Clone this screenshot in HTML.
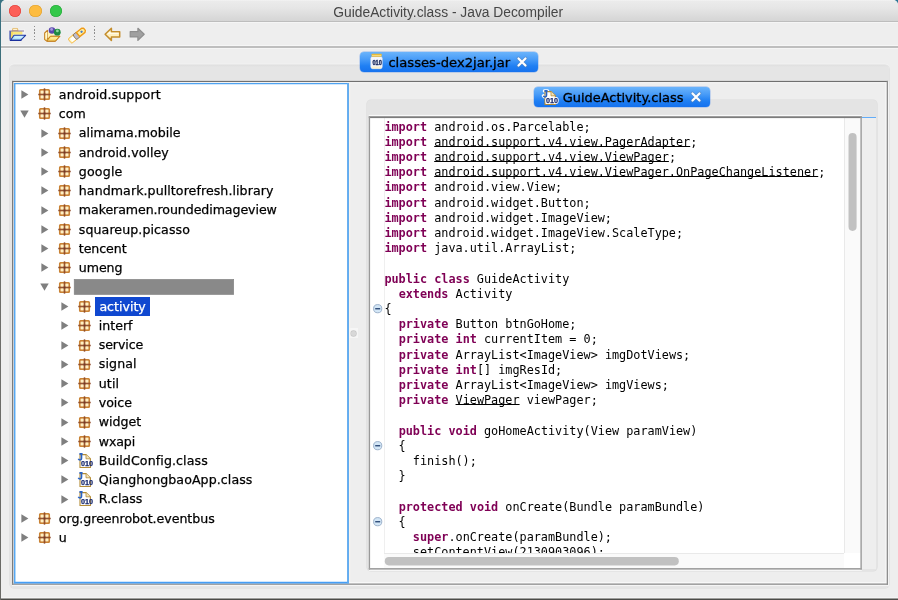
<!DOCTYPE html>
<html><head><meta charset="utf-8"><title>GuideActivity.class - Java Decompiler</title>
<style>
html,body{margin:0;padding:0;}
body{width:898px;height:600px;overflow:hidden;position:relative;background:#4c4c48;font-family:"DejaVu Sans","Liberation Sans",sans-serif;}
.desk{position:absolute;left:0;top:0;width:898px;height:12px;background:linear-gradient(90deg,#3a7484 0,#3b7f8e 1%,#2a7696 99%,#2a7696 100%);}
.win{position:absolute;left:1px;top:0;width:897px;height:600px;background:#eeeeee;border-radius:5px 5px 0 0;overflow:hidden;}
.title{position:absolute;left:0;top:0;width:100%;height:22.3px;background:linear-gradient(#f3f3f3 0,#ebebeb 1.5px,#e6e6e6 8px,#d5d5d5 20.8px);border-bottom:1.5px solid #bdbdbd;box-sizing:border-box;box-shadow:0 1px 0 #f5f5f5;}
.title span{position:absolute;left:-0.8px;width:896px;top:4.7px;text-align:center;font-family:"Liberation Sans",sans-serif;font-size:13.8px;color:#464646;line-height:16px;}
.tl-btn{position:absolute;width:12.4px;height:12.4px;border-radius:50%;top:4.9px;}
.tbsep{position:absolute;left:0;top:46.1px;width:100%;height:1.8px;background:#bebebe;box-shadow:0 -1px 0 #f6f6f6,0 1.1px 0 #f5f5f5;}
.ic{position:absolute;display:block;overflow:visible;}
.dots{position:absolute;top:26px;width:1.5px;height:15px;background:repeating-linear-gradient(#8e8e8e 0,#8e8e8e 1.5px,transparent 1.5px,transparent 3.2px);}
.outer{position:absolute;left:9.8px;top:64.9px;width:879.6px;height:523px;background:linear-gradient(#dfdfdf 0,#e5e5e5 2px,#e5e5e5 100%);border-radius:4px;box-shadow:0 0 0 0.6px #dcdcdc,0 -1.2px 0 #f5f5f5;}
.tab{position:absolute;border-radius:4px;background:linear-gradient(#6bb4fb 0,#4a9df8 35%,#1f7ff3 70%,#1672ee 100%);box-shadow:0 0 0 0.5px rgba(60,130,235,0.5);color:#000;font-size:13px;white-space:nowrap;-webkit-text-stroke:0.3px #000;}
.tab span{position:absolute;top:0;line-height:20px;}
.tree{position:absolute;left:14px;top:83px;width:335px;height:500px;background:#fff;}
.tl,.sel{position:absolute;font-size:12.6px;line-height:19.2px;height:19.2px;white-space:nowrap;color:#000;-webkit-text-stroke:0.25px currentColor;}
.sel{background:#1048d0;color:#fff;padding:0 4.2px;width:46.4px;}
.redact{position:absolute;width:160px;height:15.8px;background:#8b8b8b;}
.rpane{position:absolute;left:12px;top:81px;width:876px;height:504px;background:#eeeeee;}
.inner{position:absolute;left:366.6px;top:99.9px;width:510.4px;height:471.4px;background:#e4e4e4;border-radius:4px;box-shadow:0 0 0 0.6px #dcdcdc;}
.ruler{position:absolute;left:862px;top:117px;width:14.3px;height:452px;background:#eeeeee;}
.ruler i{position:absolute;left:0;top:-0.3px;width:14px;height:1px;background:#62acf8;}
.code{position:absolute;left:370px;top:118px;width:491px;height:450px;background:#fff;overflow:hidden;}
.gut{position:absolute;left:13.6px;top:0;width:1px;height:100%;background:#efefef;}
pre{position:absolute;margin:0;left:14.4px;top:1.6px;font-family:"DejaVu Sans Mono","Liberation Mono",monospace;font-size:11.82px;line-height:15.21px;color:#000;letter-spacing:0;}
pre b{color:#7f0055;font-weight:bold;}
pre u{text-decoration:underline;text-decoration-thickness:0.9px;text-underline-offset:0.2px;text-decoration-skip-ink:none;}
.vtrack{position:absolute;right:0;top:0;width:17px;height:100%;background:#fafafa;border-left:1px solid #e9e9e9;box-sizing:border-box;}
.htrack{position:absolute;left:14px;bottom:0;right:0;height:15px;background:#fafafa;border-top:1px solid #e9e9e9;box-sizing:border-box;}
.corner{position:absolute;right:0;bottom:0;width:17px;height:15px;background:#fff;}
.thumb{position:absolute;background:#c1c1c1;border-radius:4.2px;}
.divdot{position:absolute;left:349.3px;top:328px;width:8.6px;height:10px;background:#f6f6f6;}
.divdot i{position:absolute;left:1.5px;top:2.5px;width:5px;height:5px;border-radius:50%;background:#d8d8d8;box-shadow:0 0 0 0.7px #c6c6c6;}
.lstrip{position:absolute;left:0;top:0;width:3px;height:600px;background:linear-gradient(#3a7484 0,#3d6d78 70px,#66706f 170px,#6e6e6a 300px,#6a6a66 100%);}
</style></head><body>
<div class="desk"></div><div class="lstrip"></div>
<div class="win">
<div style="position:absolute;left:-1px;top:0;width:898px;height:600px;will-change:transform">
<div class="title" style="left:1px;width:897px"><span>GuideActivity.class - Java Decompiler</span>
<div class="tl-btn" style="left:7.8px;background:#fc5f57;box-shadow:0 0 0 0.6px #df3f38 inset"></div>
<div class="tl-btn" style="left:28.3px;background:#fdbc40;box-shadow:0 0 0 0.6px #dea032 inset"></div>
<div class="tl-btn" style="left:48.5px;background:#34c84a;box-shadow:0 0 0 0.6px #27a93a inset"></div>
</div>

<svg class="ic" style="left:8px;top:26px" width="20" height="16" viewBox="0 0 20 16">
<path d="M1 3.6H4L4.6 1.4H10L10.6 3.6H17.2V9.5L13 15.3H1.6L1 14Z" fill="#f6f6f6" opacity="0.7"/>
<path d="M4.2 4.8L4.8 2.4H9.5L10.1 4.8Z" fill="#eecb7e" stroke="#dcae58" stroke-width="0.7"/>
<rect x="5.2" y="2.9" width="3.8" height="1" fill="#fff6dc"/>
<rect x="2.6" y="5.2" width="11.8" height="3.4" fill="#fbe87a"/>
<rect x="2.6" y="5.2" width="2.4" height="8" fill="#f6da64"/>
<path d="M1.2 5H16" stroke="#7f6a9e" stroke-width="0.9"/>
<path d="M2.1 5.3V13.8" stroke="#2a40a8" stroke-width="1.3"/>
<path d="M6 9.3H17.6L12.8 14.2H2.6Z" fill="#b2e4fb" stroke="#2238a4" stroke-width="1.1" stroke-linejoin="round"/>
<path d="M7.4 10.5H15L14.1 11.6H6.4Z" fill="#e2f7ff"/>
<path d="M2.3 14.4H12.9" stroke="#1a2e9c" stroke-width="1.2" stroke-linecap="round"/>
</svg>
<svg class="ic" style="left:44px;top:26px" width="19" height="16" viewBox="0 0 19 16">
<path d="M3.4 3.4L0 6.8V14L2.6 16H11.6L17 10.2V3Z" fill="#f8f8f8" opacity="0.6"/>
<path d="M3.4 4.3L0.7 7V13.6L2.8 15.1H11.3L15.9 10.2H6.4L3.4 13V4.3Z" fill="#fbe386" stroke="#c27d1e" stroke-width="1.1" stroke-linejoin="round"/>
<path d="M1.4 7.3L3 5.7V12.6L1.5 13.2Z" fill="#fff8d4"/>
<path d="M3.6 6V12.4L6.4 10.1H9.5V6Z" fill="#fff3b4"/>
<path d="M6.4 10.2H15.9L11.3 15.1H2.8Z" fill="#fbdf72" stroke="#c27d1e" stroke-width="1" stroke-linejoin="round"/>
<path d="M7.2 11.4H13.6L12.7 12.4H6.2Z" fill="#fff3b0"/>
<circle cx="8" cy="4.5" r="3.3" fill="#5a48ae"/><circle cx="7.6" cy="3.4" r="1.4" fill="#a79bdf"/>
<circle cx="13.3" cy="6.2" r="3.4" fill="#1e8a42"/><circle cx="13.4" cy="4.9" r="1.4" fill="#8ed6a0"/>
</svg>
<svg class="ic" style="left:68px;top:25.6px" width="19" height="18" viewBox="0 0 19 18">
<g transform="rotate(-39 9.5 9)">
<path d="M-0.8 5.6H19.4Q20.8 9 19.4 12.4H-0.8Z" fill="#f8f8f8" opacity="0.6"/>
<path d="M6.2 6.1H1Q-0.4 6.1 -0.4 7.5V10.6Q-0.4 11.9 1 11.9H6.2Z" fill="#fff6c4" stroke="#f3b43c" stroke-width="0.9"/>
<path d="M6.2 7.4H1.4V11H6.2Z" fill="#ffffff"/>
<path d="M6.2 6H10.2V12H6.2Q5 9 6.2 6Z" fill="#bcbcce" stroke="#8e6e3e" stroke-width="0.8"/>
<path d="M10.2 6.3H17L18.5 7.6V10.4L17 11.7H10.2Z" fill="#fdeea2" stroke="#ee9a18" stroke-width="1.4" stroke-linejoin="round"/>
<rect x="13.6" y="8" width="2.2" height="2" rx="0.6" fill="#4a7ac2"/>
</g>
</svg>
<svg class="ic" style="left:104px;top:27px" width="17" height="15" viewBox="0 0 17 15">
<path d="M1.1 7.3L7.4 1.3V4.7H15.7V9.9H7.4V13.4Z" fill="#fff0c0" stroke="#c48d2c" stroke-width="1.5" stroke-linejoin="round"/>
<path d="M3.2 7.3L6.4 4.2V5.8H14.6V6.8H5Z" fill="#ffffff" opacity="0.85"/>
</svg>
<svg class="ic" style="left:129px;top:27px" width="17" height="15" viewBox="0 0 17 15">
<path d="M15.2 7.3L8.9 1.3V4.7H1.2V9.9H8.9V13.4Z" fill="#a0a0a0" stroke="#8e8e8e" stroke-width="1.2" stroke-linejoin="round"/>
</svg>
<div class="dots" style="left:33.8px"></div>
<div class="dots" style="left:93.6px"></div>

<div class="tbsep"></div>
<div class="outer"></div>
<div class="tab" style="left:360.3px;top:52px;width:177.8px;height:20px"><span style="left:28.1px;top:0.5px;font-size:13.15px">classes-dex2jar.jar</span></div>
<svg class="ic" style="left:369.5px;top:53px" width="13" height="16.5" viewBox="0 0 13 16.5">
<rect x="0.7" y="3.6" width="11.6" height="12.2" rx="2" fill="#f4f6fc" stroke="#d9dbe6" stroke-width="0.5"/>
<rect x="1.6" y="13.4" width="9.8" height="2" rx="0.8" fill="#fbf0cc"/>
<rect x="1.5" y="0.7" width="10.2" height="3" rx="0.7" fill="#e9bb3a"/>
<rect x="2" y="2" width="9.2" height="0.9" fill="#f8dd84"/>
<text x="2.4" y="12.1" font-family="Liberation Sans, sans-serif" font-weight="bold" font-size="6.3" fill="#18285c" stroke="#18285c" stroke-width="0.35" textLength="9.4" lengthAdjust="spacingAndGlyphs">010</text>
</svg>
<svg class="ic" style="left:516.30px;top:56.00px" width="12" height="12" viewBox="0 0 12 12"><path d="M2.3 2.3L9.7 9.7M9.7 2.3L2.3 9.7" stroke="#5c7fae" stroke-width="3.4" stroke-linecap="round" opacity="0.55"/><path d="M2.5 2.5L9.5 9.5M9.5 2.5L2.5 9.5" stroke="#ffffff" stroke-width="2.2" stroke-linecap="round"/></svg>
<div class="rpane"></div>
<div class="tree"></div>
<svg class="ic" style="left:20.80px;top:90.00px" width="8" height="9" viewBox="0 0 8 9"><path d="M0.4 0.3V8.7L7.4 4.5Z" fill="#7f7f7f"/></svg><svg class="ic" style="left:38.40px;top:88.00px" width="13" height="13" viewBox="0 0 13 13">
<rect x="1.7" y="1.7" width="9.6" height="9.6" rx="0.8" fill="#e4b079" stroke="#c98234" stroke-width="1.5"/>
<rect x="2.7" y="2.7" width="3" height="3" rx="0.8" fill="#fff1c4"/><rect x="7.3" y="2.7" width="3" height="3" rx="0.8" fill="#fff1c4"/>
<rect x="2.7" y="7.3" width="3" height="3" rx="0.8" fill="#fff1c4"/><rect x="7.3" y="7.3" width="3" height="3" rx="0.8" fill="#fff1c4"/>
<path d="M6.5 0.2V12.8M0.2 6.5H12.8" stroke="#8a4526" stroke-width="1.5" fill="none" opacity="0.85"/>
<rect x="5.6" y="5.6" width="1.8" height="1.8" fill="#6e3a2a"/>
</svg><div class="tl" style="left:58.80px;top:84.70px;letter-spacing:0.123px">android.support</div><svg class="ic" style="left:20.30px;top:109.77px" width="9" height="8" viewBox="0 0 9 8"><path d="M0.3 0.5H8.7L4.5 7.7Z" fill="#7f7f7f"/></svg><svg class="ic" style="left:38.40px;top:107.27px" width="13" height="13" viewBox="0 0 13 13">
<rect x="1.7" y="1.7" width="9.6" height="9.6" rx="0.8" fill="#e4b079" stroke="#c98234" stroke-width="1.5"/>
<rect x="2.7" y="2.7" width="3" height="3" rx="0.8" fill="#fff1c4"/><rect x="7.3" y="2.7" width="3" height="3" rx="0.8" fill="#fff1c4"/>
<rect x="2.7" y="7.3" width="3" height="3" rx="0.8" fill="#fff1c4"/><rect x="7.3" y="7.3" width="3" height="3" rx="0.8" fill="#fff1c4"/>
<path d="M6.5 0.2V12.8M0.2 6.5H12.8" stroke="#8a4526" stroke-width="1.5" fill="none" opacity="0.85"/>
<rect x="5.6" y="5.6" width="1.8" height="1.8" fill="#6e3a2a"/>
</svg><div class="tl" style="left:58.80px;top:103.97px;letter-spacing:0.098px">com</div><svg class="ic" style="left:40.80px;top:128.54px" width="8" height="9" viewBox="0 0 8 9"><path d="M0.4 0.3V8.7L7.4 4.5Z" fill="#7f7f7f"/></svg><svg class="ic" style="left:58.40px;top:126.54px" width="13" height="13" viewBox="0 0 13 13">
<rect x="1.7" y="1.7" width="9.6" height="9.6" rx="0.8" fill="#e4b079" stroke="#c98234" stroke-width="1.5"/>
<rect x="2.7" y="2.7" width="3" height="3" rx="0.8" fill="#fff1c4"/><rect x="7.3" y="2.7" width="3" height="3" rx="0.8" fill="#fff1c4"/>
<rect x="2.7" y="7.3" width="3" height="3" rx="0.8" fill="#fff1c4"/><rect x="7.3" y="7.3" width="3" height="3" rx="0.8" fill="#fff1c4"/>
<path d="M6.5 0.2V12.8M0.2 6.5H12.8" stroke="#8a4526" stroke-width="1.5" fill="none" opacity="0.85"/>
<rect x="5.6" y="5.6" width="1.8" height="1.8" fill="#6e3a2a"/>
</svg><div class="tl" style="left:78.80px;top:123.24px;letter-spacing:0.028px">alimama.mobile</div><svg class="ic" style="left:40.80px;top:147.81px" width="8" height="9" viewBox="0 0 8 9"><path d="M0.4 0.3V8.7L7.4 4.5Z" fill="#7f7f7f"/></svg><svg class="ic" style="left:58.40px;top:145.81px" width="13" height="13" viewBox="0 0 13 13">
<rect x="1.7" y="1.7" width="9.6" height="9.6" rx="0.8" fill="#e4b079" stroke="#c98234" stroke-width="1.5"/>
<rect x="2.7" y="2.7" width="3" height="3" rx="0.8" fill="#fff1c4"/><rect x="7.3" y="2.7" width="3" height="3" rx="0.8" fill="#fff1c4"/>
<rect x="2.7" y="7.3" width="3" height="3" rx="0.8" fill="#fff1c4"/><rect x="7.3" y="7.3" width="3" height="3" rx="0.8" fill="#fff1c4"/>
<path d="M6.5 0.2V12.8M0.2 6.5H12.8" stroke="#8a4526" stroke-width="1.5" fill="none" opacity="0.85"/>
<rect x="5.6" y="5.6" width="1.8" height="1.8" fill="#6e3a2a"/>
</svg><div class="tl" style="left:78.80px;top:142.51px;letter-spacing:0.067px">android.volley</div><svg class="ic" style="left:40.80px;top:167.08px" width="8" height="9" viewBox="0 0 8 9"><path d="M0.4 0.3V8.7L7.4 4.5Z" fill="#7f7f7f"/></svg><svg class="ic" style="left:58.40px;top:165.08px" width="13" height="13" viewBox="0 0 13 13">
<rect x="1.7" y="1.7" width="9.6" height="9.6" rx="0.8" fill="#e4b079" stroke="#c98234" stroke-width="1.5"/>
<rect x="2.7" y="2.7" width="3" height="3" rx="0.8" fill="#fff1c4"/><rect x="7.3" y="2.7" width="3" height="3" rx="0.8" fill="#fff1c4"/>
<rect x="2.7" y="7.3" width="3" height="3" rx="0.8" fill="#fff1c4"/><rect x="7.3" y="7.3" width="3" height="3" rx="0.8" fill="#fff1c4"/>
<path d="M6.5 0.2V12.8M0.2 6.5H12.8" stroke="#8a4526" stroke-width="1.5" fill="none" opacity="0.85"/>
<rect x="5.6" y="5.6" width="1.8" height="1.8" fill="#6e3a2a"/>
</svg><div class="tl" style="left:78.80px;top:161.78px;letter-spacing:0.174px">google</div><svg class="ic" style="left:40.80px;top:186.35px" width="8" height="9" viewBox="0 0 8 9"><path d="M0.4 0.3V8.7L7.4 4.5Z" fill="#7f7f7f"/></svg><svg class="ic" style="left:58.40px;top:184.35px" width="13" height="13" viewBox="0 0 13 13">
<rect x="1.7" y="1.7" width="9.6" height="9.6" rx="0.8" fill="#e4b079" stroke="#c98234" stroke-width="1.5"/>
<rect x="2.7" y="2.7" width="3" height="3" rx="0.8" fill="#fff1c4"/><rect x="7.3" y="2.7" width="3" height="3" rx="0.8" fill="#fff1c4"/>
<rect x="2.7" y="7.3" width="3" height="3" rx="0.8" fill="#fff1c4"/><rect x="7.3" y="7.3" width="3" height="3" rx="0.8" fill="#fff1c4"/>
<path d="M6.5 0.2V12.8M0.2 6.5H12.8" stroke="#8a4526" stroke-width="1.5" fill="none" opacity="0.85"/>
<rect x="5.6" y="5.6" width="1.8" height="1.8" fill="#6e3a2a"/>
</svg><div class="tl" style="left:78.80px;top:181.05px;letter-spacing:0.072px">handmark.pulltorefresh.library</div><svg class="ic" style="left:40.80px;top:205.62px" width="8" height="9" viewBox="0 0 8 9"><path d="M0.4 0.3V8.7L7.4 4.5Z" fill="#7f7f7f"/></svg><svg class="ic" style="left:58.40px;top:203.62px" width="13" height="13" viewBox="0 0 13 13">
<rect x="1.7" y="1.7" width="9.6" height="9.6" rx="0.8" fill="#e4b079" stroke="#c98234" stroke-width="1.5"/>
<rect x="2.7" y="2.7" width="3" height="3" rx="0.8" fill="#fff1c4"/><rect x="7.3" y="2.7" width="3" height="3" rx="0.8" fill="#fff1c4"/>
<rect x="2.7" y="7.3" width="3" height="3" rx="0.8" fill="#fff1c4"/><rect x="7.3" y="7.3" width="3" height="3" rx="0.8" fill="#fff1c4"/>
<path d="M6.5 0.2V12.8M0.2 6.5H12.8" stroke="#8a4526" stroke-width="1.5" fill="none" opacity="0.85"/>
<rect x="5.6" y="5.6" width="1.8" height="1.8" fill="#6e3a2a"/>
</svg><div class="tl" style="left:78.80px;top:200.32px;letter-spacing:-0.078px">makeramen.roundedimageview</div><svg class="ic" style="left:40.80px;top:224.89px" width="8" height="9" viewBox="0 0 8 9"><path d="M0.4 0.3V8.7L7.4 4.5Z" fill="#7f7f7f"/></svg><svg class="ic" style="left:58.40px;top:222.89px" width="13" height="13" viewBox="0 0 13 13">
<rect x="1.7" y="1.7" width="9.6" height="9.6" rx="0.8" fill="#e4b079" stroke="#c98234" stroke-width="1.5"/>
<rect x="2.7" y="2.7" width="3" height="3" rx="0.8" fill="#fff1c4"/><rect x="7.3" y="2.7" width="3" height="3" rx="0.8" fill="#fff1c4"/>
<rect x="2.7" y="7.3" width="3" height="3" rx="0.8" fill="#fff1c4"/><rect x="7.3" y="7.3" width="3" height="3" rx="0.8" fill="#fff1c4"/>
<path d="M6.5 0.2V12.8M0.2 6.5H12.8" stroke="#8a4526" stroke-width="1.5" fill="none" opacity="0.85"/>
<rect x="5.6" y="5.6" width="1.8" height="1.8" fill="#6e3a2a"/>
</svg><div class="tl" style="left:78.80px;top:219.59px;letter-spacing:0.084px">squareup.picasso</div><svg class="ic" style="left:40.80px;top:244.16px" width="8" height="9" viewBox="0 0 8 9"><path d="M0.4 0.3V8.7L7.4 4.5Z" fill="#7f7f7f"/></svg><svg class="ic" style="left:58.40px;top:242.16px" width="13" height="13" viewBox="0 0 13 13">
<rect x="1.7" y="1.7" width="9.6" height="9.6" rx="0.8" fill="#e4b079" stroke="#c98234" stroke-width="1.5"/>
<rect x="2.7" y="2.7" width="3" height="3" rx="0.8" fill="#fff1c4"/><rect x="7.3" y="2.7" width="3" height="3" rx="0.8" fill="#fff1c4"/>
<rect x="2.7" y="7.3" width="3" height="3" rx="0.8" fill="#fff1c4"/><rect x="7.3" y="7.3" width="3" height="3" rx="0.8" fill="#fff1c4"/>
<path d="M6.5 0.2V12.8M0.2 6.5H12.8" stroke="#8a4526" stroke-width="1.5" fill="none" opacity="0.85"/>
<rect x="5.6" y="5.6" width="1.8" height="1.8" fill="#6e3a2a"/>
</svg><div class="tl" style="left:78.80px;top:238.86px;letter-spacing:-0.081px">tencent</div><svg class="ic" style="left:40.80px;top:263.43px" width="8" height="9" viewBox="0 0 8 9"><path d="M0.4 0.3V8.7L7.4 4.5Z" fill="#7f7f7f"/></svg><svg class="ic" style="left:58.40px;top:261.43px" width="13" height="13" viewBox="0 0 13 13">
<rect x="1.7" y="1.7" width="9.6" height="9.6" rx="0.8" fill="#e4b079" stroke="#c98234" stroke-width="1.5"/>
<rect x="2.7" y="2.7" width="3" height="3" rx="0.8" fill="#fff1c4"/><rect x="7.3" y="2.7" width="3" height="3" rx="0.8" fill="#fff1c4"/>
<rect x="2.7" y="7.3" width="3" height="3" rx="0.8" fill="#fff1c4"/><rect x="7.3" y="7.3" width="3" height="3" rx="0.8" fill="#fff1c4"/>
<path d="M6.5 0.2V12.8M0.2 6.5H12.8" stroke="#8a4526" stroke-width="1.5" fill="none" opacity="0.85"/>
<rect x="5.6" y="5.6" width="1.8" height="1.8" fill="#6e3a2a"/>
</svg><div class="tl" style="left:78.80px;top:258.13px;letter-spacing:-0.057px">umeng</div><svg class="ic" style="left:40.30px;top:283.20px" width="9" height="8" viewBox="0 0 9 8"><path d="M0.3 0.5H8.7L4.5 7.7Z" fill="#7f7f7f"/></svg><svg class="ic" style="left:58.40px;top:280.70px" width="13" height="13" viewBox="0 0 13 13">
<rect x="1.7" y="1.7" width="9.6" height="9.6" rx="0.8" fill="#e4b079" stroke="#c98234" stroke-width="1.5"/>
<rect x="2.7" y="2.7" width="3" height="3" rx="0.8" fill="#fff1c4"/><rect x="7.3" y="2.7" width="3" height="3" rx="0.8" fill="#fff1c4"/>
<rect x="2.7" y="7.3" width="3" height="3" rx="0.8" fill="#fff1c4"/><rect x="7.3" y="7.3" width="3" height="3" rx="0.8" fill="#fff1c4"/>
<path d="M6.5 0.2V12.8M0.2 6.5H12.8" stroke="#8a4526" stroke-width="1.5" fill="none" opacity="0.85"/>
<rect x="5.6" y="5.6" width="1.8" height="1.8" fill="#6e3a2a"/>
</svg><svg class="ic" style="left:73px;top:278px" width="162" height="18" viewBox="73 278 162 18"><rect x="74.2" y="279.4" width="159.5" height="15.1" fill="#898989" stroke="#808080" stroke-width="0.6"/></svg><svg class="ic" style="left:60.80px;top:301.97px" width="8" height="9" viewBox="0 0 8 9"><path d="M0.4 0.3V8.7L7.4 4.5Z" fill="#7f7f7f"/></svg><svg class="ic" style="left:78.40px;top:299.97px" width="13" height="13" viewBox="0 0 13 13">
<rect x="1.7" y="1.7" width="9.6" height="9.6" rx="0.8" fill="#e4b079" stroke="#c98234" stroke-width="1.5"/>
<rect x="2.7" y="2.7" width="3" height="3" rx="0.8" fill="#fff1c4"/><rect x="7.3" y="2.7" width="3" height="3" rx="0.8" fill="#fff1c4"/>
<rect x="2.7" y="7.3" width="3" height="3" rx="0.8" fill="#fff1c4"/><rect x="7.3" y="7.3" width="3" height="3" rx="0.8" fill="#fff1c4"/>
<path d="M6.5 0.2V12.8M0.2 6.5H12.8" stroke="#8a4526" stroke-width="1.5" fill="none" opacity="0.85"/>
<rect x="5.6" y="5.6" width="1.8" height="1.8" fill="#6e3a2a"/>
</svg><div class="sel" style="left:95.2px;top:296.67px">activity</div><svg class="ic" style="left:60.80px;top:321.24px" width="8" height="9" viewBox="0 0 8 9"><path d="M0.4 0.3V8.7L7.4 4.5Z" fill="#7f7f7f"/></svg><svg class="ic" style="left:78.40px;top:319.24px" width="13" height="13" viewBox="0 0 13 13">
<rect x="1.7" y="1.7" width="9.6" height="9.6" rx="0.8" fill="#e4b079" stroke="#c98234" stroke-width="1.5"/>
<rect x="2.7" y="2.7" width="3" height="3" rx="0.8" fill="#fff1c4"/><rect x="7.3" y="2.7" width="3" height="3" rx="0.8" fill="#fff1c4"/>
<rect x="2.7" y="7.3" width="3" height="3" rx="0.8" fill="#fff1c4"/><rect x="7.3" y="7.3" width="3" height="3" rx="0.8" fill="#fff1c4"/>
<path d="M6.5 0.2V12.8M0.2 6.5H12.8" stroke="#8a4526" stroke-width="1.5" fill="none" opacity="0.85"/>
<rect x="5.6" y="5.6" width="1.8" height="1.8" fill="#6e3a2a"/>
</svg><div class="tl" style="left:98.80px;top:315.94px;letter-spacing:-0.014px">interf</div><svg class="ic" style="left:60.80px;top:340.51px" width="8" height="9" viewBox="0 0 8 9"><path d="M0.4 0.3V8.7L7.4 4.5Z" fill="#7f7f7f"/></svg><svg class="ic" style="left:78.40px;top:338.51px" width="13" height="13" viewBox="0 0 13 13">
<rect x="1.7" y="1.7" width="9.6" height="9.6" rx="0.8" fill="#e4b079" stroke="#c98234" stroke-width="1.5"/>
<rect x="2.7" y="2.7" width="3" height="3" rx="0.8" fill="#fff1c4"/><rect x="7.3" y="2.7" width="3" height="3" rx="0.8" fill="#fff1c4"/>
<rect x="2.7" y="7.3" width="3" height="3" rx="0.8" fill="#fff1c4"/><rect x="7.3" y="7.3" width="3" height="3" rx="0.8" fill="#fff1c4"/>
<path d="M6.5 0.2V12.8M0.2 6.5H12.8" stroke="#8a4526" stroke-width="1.5" fill="none" opacity="0.85"/>
<rect x="5.6" y="5.6" width="1.8" height="1.8" fill="#6e3a2a"/>
</svg><div class="tl" style="left:98.80px;top:335.21px;letter-spacing:-0.118px">service</div><svg class="ic" style="left:60.80px;top:359.78px" width="8" height="9" viewBox="0 0 8 9"><path d="M0.4 0.3V8.7L7.4 4.5Z" fill="#7f7f7f"/></svg><svg class="ic" style="left:78.40px;top:357.78px" width="13" height="13" viewBox="0 0 13 13">
<rect x="1.7" y="1.7" width="9.6" height="9.6" rx="0.8" fill="#e4b079" stroke="#c98234" stroke-width="1.5"/>
<rect x="2.7" y="2.7" width="3" height="3" rx="0.8" fill="#fff1c4"/><rect x="7.3" y="2.7" width="3" height="3" rx="0.8" fill="#fff1c4"/>
<rect x="2.7" y="7.3" width="3" height="3" rx="0.8" fill="#fff1c4"/><rect x="7.3" y="7.3" width="3" height="3" rx="0.8" fill="#fff1c4"/>
<path d="M6.5 0.2V12.8M0.2 6.5H12.8" stroke="#8a4526" stroke-width="1.5" fill="none" opacity="0.85"/>
<rect x="5.6" y="5.6" width="1.8" height="1.8" fill="#6e3a2a"/>
</svg><div class="tl" style="left:98.80px;top:354.48px;letter-spacing:0.106px">signal</div><svg class="ic" style="left:60.80px;top:379.05px" width="8" height="9" viewBox="0 0 8 9"><path d="M0.4 0.3V8.7L7.4 4.5Z" fill="#7f7f7f"/></svg><svg class="ic" style="left:78.40px;top:377.05px" width="13" height="13" viewBox="0 0 13 13">
<rect x="1.7" y="1.7" width="9.6" height="9.6" rx="0.8" fill="#e4b079" stroke="#c98234" stroke-width="1.5"/>
<rect x="2.7" y="2.7" width="3" height="3" rx="0.8" fill="#fff1c4"/><rect x="7.3" y="2.7" width="3" height="3" rx="0.8" fill="#fff1c4"/>
<rect x="2.7" y="7.3" width="3" height="3" rx="0.8" fill="#fff1c4"/><rect x="7.3" y="7.3" width="3" height="3" rx="0.8" fill="#fff1c4"/>
<path d="M6.5 0.2V12.8M0.2 6.5H12.8" stroke="#8a4526" stroke-width="1.5" fill="none" opacity="0.85"/>
<rect x="5.6" y="5.6" width="1.8" height="1.8" fill="#6e3a2a"/>
</svg><div class="tl" style="left:98.80px;top:373.75px;letter-spacing:0.095px">util</div><svg class="ic" style="left:60.80px;top:398.32px" width="8" height="9" viewBox="0 0 8 9"><path d="M0.4 0.3V8.7L7.4 4.5Z" fill="#7f7f7f"/></svg><svg class="ic" style="left:78.40px;top:396.32px" width="13" height="13" viewBox="0 0 13 13">
<rect x="1.7" y="1.7" width="9.6" height="9.6" rx="0.8" fill="#e4b079" stroke="#c98234" stroke-width="1.5"/>
<rect x="2.7" y="2.7" width="3" height="3" rx="0.8" fill="#fff1c4"/><rect x="7.3" y="2.7" width="3" height="3" rx="0.8" fill="#fff1c4"/>
<rect x="2.7" y="7.3" width="3" height="3" rx="0.8" fill="#fff1c4"/><rect x="7.3" y="7.3" width="3" height="3" rx="0.8" fill="#fff1c4"/>
<path d="M6.5 0.2V12.8M0.2 6.5H12.8" stroke="#8a4526" stroke-width="1.5" fill="none" opacity="0.85"/>
<rect x="5.6" y="5.6" width="1.8" height="1.8" fill="#6e3a2a"/>
</svg><div class="tl" style="left:98.80px;top:393.02px;letter-spacing:-0.049px">voice</div><svg class="ic" style="left:60.80px;top:417.59px" width="8" height="9" viewBox="0 0 8 9"><path d="M0.4 0.3V8.7L7.4 4.5Z" fill="#7f7f7f"/></svg><svg class="ic" style="left:78.40px;top:415.59px" width="13" height="13" viewBox="0 0 13 13">
<rect x="1.7" y="1.7" width="9.6" height="9.6" rx="0.8" fill="#e4b079" stroke="#c98234" stroke-width="1.5"/>
<rect x="2.7" y="2.7" width="3" height="3" rx="0.8" fill="#fff1c4"/><rect x="7.3" y="2.7" width="3" height="3" rx="0.8" fill="#fff1c4"/>
<rect x="2.7" y="7.3" width="3" height="3" rx="0.8" fill="#fff1c4"/><rect x="7.3" y="7.3" width="3" height="3" rx="0.8" fill="#fff1c4"/>
<path d="M6.5 0.2V12.8M0.2 6.5H12.8" stroke="#8a4526" stroke-width="1.5" fill="none" opacity="0.85"/>
<rect x="5.6" y="5.6" width="1.8" height="1.8" fill="#6e3a2a"/>
</svg><div class="tl" style="left:98.80px;top:412.29px;letter-spacing:-0.031px">widget</div><svg class="ic" style="left:60.80px;top:436.86px" width="8" height="9" viewBox="0 0 8 9"><path d="M0.4 0.3V8.7L7.4 4.5Z" fill="#7f7f7f"/></svg><svg class="ic" style="left:78.40px;top:434.86px" width="13" height="13" viewBox="0 0 13 13">
<rect x="1.7" y="1.7" width="9.6" height="9.6" rx="0.8" fill="#e4b079" stroke="#c98234" stroke-width="1.5"/>
<rect x="2.7" y="2.7" width="3" height="3" rx="0.8" fill="#fff1c4"/><rect x="7.3" y="2.7" width="3" height="3" rx="0.8" fill="#fff1c4"/>
<rect x="2.7" y="7.3" width="3" height="3" rx="0.8" fill="#fff1c4"/><rect x="7.3" y="7.3" width="3" height="3" rx="0.8" fill="#fff1c4"/>
<path d="M6.5 0.2V12.8M0.2 6.5H12.8" stroke="#8a4526" stroke-width="1.5" fill="none" opacity="0.85"/>
<rect x="5.6" y="5.6" width="1.8" height="1.8" fill="#6e3a2a"/>
</svg><div class="tl" style="left:98.80px;top:431.56px;letter-spacing:-0.134px">wxapi</div><svg class="ic" style="left:60.80px;top:456.13px" width="8" height="9" viewBox="0 0 8 9"><path d="M0.4 0.3V8.7L7.4 4.5Z" fill="#7f7f7f"/></svg><svg class="ic" style="left:78.10px;top:452.93px" width="17" height="16" viewBox="0 0 17 16">
<path d="M2 1.6H8L12.4 5.8V14.5H2Z" fill="#ffffff" stroke="#b48c36" stroke-width="1.1"/>
<path d="M8 1.6V5.8H12.4" fill="#f3e4bb" stroke="#b48c36" stroke-width="0.8"/>
<path d="M1.4 0.9H4.6M3.5 0.9V5Q3.5 7 2 7Q0.8 7 0.4 5.8" fill="none" stroke="#2a63c4" stroke-width="1.6"/>
<text x="3" y="13.1" font-family="Liberation Sans, sans-serif" font-weight="bold" font-size="7.6" fill="#16286e" stroke="#16286e" stroke-width="0.25" textLength="12" lengthAdjust="spacingAndGlyphs">010</text>
</svg><div class="tl" style="left:98.80px;top:450.83px;letter-spacing:0.106px">BuildConfig.class</div><svg class="ic" style="left:60.80px;top:475.40px" width="8" height="9" viewBox="0 0 8 9"><path d="M0.4 0.3V8.7L7.4 4.5Z" fill="#7f7f7f"/></svg><svg class="ic" style="left:78.10px;top:472.20px" width="17" height="16" viewBox="0 0 17 16">
<path d="M2 1.6H8L12.4 5.8V14.5H2Z" fill="#ffffff" stroke="#b48c36" stroke-width="1.1"/>
<path d="M8 1.6V5.8H12.4" fill="#f3e4bb" stroke="#b48c36" stroke-width="0.8"/>
<path d="M1.4 0.9H4.6M3.5 0.9V5Q3.5 7 2 7Q0.8 7 0.4 5.8" fill="none" stroke="#2a63c4" stroke-width="1.6"/>
<text x="3" y="13.1" font-family="Liberation Sans, sans-serif" font-weight="bold" font-size="7.6" fill="#16286e" stroke="#16286e" stroke-width="0.25" textLength="12" lengthAdjust="spacingAndGlyphs">010</text>
</svg><div class="tl" style="left:98.80px;top:470.10px;letter-spacing:0.078px">QianghongbaoApp.class</div><svg class="ic" style="left:60.80px;top:494.67px" width="8" height="9" viewBox="0 0 8 9"><path d="M0.4 0.3V8.7L7.4 4.5Z" fill="#7f7f7f"/></svg><svg class="ic" style="left:78.10px;top:491.47px" width="17" height="16" viewBox="0 0 17 16">
<path d="M2 1.6H8L12.4 5.8V14.5H2Z" fill="#ffffff" stroke="#b48c36" stroke-width="1.1"/>
<path d="M8 1.6V5.8H12.4" fill="#f3e4bb" stroke="#b48c36" stroke-width="0.8"/>
<path d="M1.4 0.9H4.6M3.5 0.9V5Q3.5 7 2 7Q0.8 7 0.4 5.8" fill="none" stroke="#2a63c4" stroke-width="1.6"/>
<text x="3" y="13.1" font-family="Liberation Sans, sans-serif" font-weight="bold" font-size="7.6" fill="#16286e" stroke="#16286e" stroke-width="0.25" textLength="12" lengthAdjust="spacingAndGlyphs">010</text>
</svg><div class="tl" style="left:98.80px;top:489.37px;letter-spacing:-0.011px">R.class</div><svg class="ic" style="left:20.80px;top:513.94px" width="8" height="9" viewBox="0 0 8 9"><path d="M0.4 0.3V8.7L7.4 4.5Z" fill="#7f7f7f"/></svg><svg class="ic" style="left:38.40px;top:511.94px" width="13" height="13" viewBox="0 0 13 13">
<rect x="1.7" y="1.7" width="9.6" height="9.6" rx="0.8" fill="#e4b079" stroke="#c98234" stroke-width="1.5"/>
<rect x="2.7" y="2.7" width="3" height="3" rx="0.8" fill="#fff1c4"/><rect x="7.3" y="2.7" width="3" height="3" rx="0.8" fill="#fff1c4"/>
<rect x="2.7" y="7.3" width="3" height="3" rx="0.8" fill="#fff1c4"/><rect x="7.3" y="7.3" width="3" height="3" rx="0.8" fill="#fff1c4"/>
<path d="M6.5 0.2V12.8M0.2 6.5H12.8" stroke="#8a4526" stroke-width="1.5" fill="none" opacity="0.85"/>
<rect x="5.6" y="5.6" width="1.8" height="1.8" fill="#6e3a2a"/>
</svg><div class="tl" style="left:58.80px;top:508.64px;letter-spacing:-0.034px">org.greenrobot.eventbus</div><svg class="ic" style="left:20.80px;top:533.21px" width="8" height="9" viewBox="0 0 8 9"><path d="M0.4 0.3V8.7L7.4 4.5Z" fill="#7f7f7f"/></svg><svg class="ic" style="left:38.40px;top:531.21px" width="13" height="13" viewBox="0 0 13 13">
<rect x="1.7" y="1.7" width="9.6" height="9.6" rx="0.8" fill="#e4b079" stroke="#c98234" stroke-width="1.5"/>
<rect x="2.7" y="2.7" width="3" height="3" rx="0.8" fill="#fff1c4"/><rect x="7.3" y="2.7" width="3" height="3" rx="0.8" fill="#fff1c4"/>
<rect x="2.7" y="7.3" width="3" height="3" rx="0.8" fill="#fff1c4"/><rect x="7.3" y="7.3" width="3" height="3" rx="0.8" fill="#fff1c4"/>
<path d="M6.5 0.2V12.8M0.2 6.5H12.8" stroke="#8a4526" stroke-width="1.5" fill="none" opacity="0.85"/>
<rect x="5.6" y="5.6" width="1.8" height="1.8" fill="#6e3a2a"/>
</svg><div class="tl" style="left:58.80px;top:527.91px;letter-spacing:0px">u</div>
<div class="divdot"><i></i></div>
<div class="inner"></div>
<div class="tab" style="left:534.3px;top:87.4px;width:175.6px;height:20px"><span style="left:28.4px;top:0.9px;font-size:12.95px">GuideActivity.class</span></div>
<svg class="ic" style="left:543.20px;top:90.00px" width="17" height="16" viewBox="0 0 17 16">
<path d="M1.4 0.9H4.6M3.5 0.9V5Q3.5 7 2 7Q0.8 7 0.4 5.8" fill="none" stroke="#ffffff" stroke-width="3.4" stroke-linecap="round"/><path d="M2 1.6H8L12.4 5.8V14.5H2Z" fill="#ffffff" stroke="#b48c36" stroke-width="1.1"/>
<path d="M8 1.6V5.8H12.4" fill="#f3e4bb" stroke="#b48c36" stroke-width="0.8"/>
<path d="M1.4 0.9H4.6M3.5 0.9V5Q3.5 7 2 7Q0.8 7 0.4 5.8" fill="none" stroke="#2a63c4" stroke-width="1.6"/>
<text x="3" y="13.1" font-family="Liberation Sans, sans-serif" font-weight="bold" font-size="7.6" fill="#fff" stroke="#ffffff" stroke-width="2" textLength="12" lengthAdjust="spacingAndGlyphs">010</text><text x="3" y="13.1" font-family="Liberation Sans, sans-serif" font-weight="bold" font-size="7.6" fill="#16286e" stroke="#16286e" stroke-width="0.25" textLength="12" lengthAdjust="spacingAndGlyphs">010</text>
</svg>
<svg class="ic" style="left:689.60px;top:91.40px" width="12" height="12" viewBox="0 0 12 12"><path d="M2.3 2.3L9.7 9.7M9.7 2.3L2.3 9.7" stroke="#5c7fae" stroke-width="3.4" stroke-linecap="round" opacity="0.55"/><path d="M2.5 2.5L9.5 9.5M9.5 2.5L2.5 9.5" stroke="#ffffff" stroke-width="2.2" stroke-linecap="round"/></svg>
<div class="ruler"><i></i></div>
<div class="code"><div class="gut"></div><pre><b>import</b> android.os.Parcelable;
<b>import</b> <u>android.support.v4.view.PagerAdapter</u>;
<b>import</b> <u>android.support.v4.view.ViewPager</u>;
<b>import</b> <u>android.support.v4.view.ViewPager.OnPageChangeListener</u>;
<b>import</b> android.view.View;
<b>import</b> android.widget.Button;
<b>import</b> android.widget.ImageView;
<b>import</b> android.widget.ImageView.ScaleType;
<b>import</b> java.util.ArrayList;

<b>public</b> <b>class</b> GuideActivity
  <b>extends</b> Activity
{
  <b>private</b> Button btnGoHome;
  <b>private</b> <b>int</b> currentItem = 0;
  <b>private</b> ArrayList&lt;ImageView&gt; imgDotViews;
  <b>private</b> <b>int</b>[] imgResId;
  <b>private</b> ArrayList&lt;ImageView&gt; imgViews;
  <b>private</b> <u>ViewPager</u> viewPager;

  <b>public</b> <b>void</b> goHomeActivity(View paramView)
  {
    finish();
  }

  <b>protected</b> <b>void</b> onCreate(Bundle paramBundle)
  {
    <b>super</b>.onCreate(paramBundle);
    setContentView(2130903096);</pre>
<div class="vtrack"></div><div class="htrack"></div><div class="corner"></div>
</div>
<svg class="ic" style="left:372.8px;top:303.92px" width="9.4" height="9.4" viewBox="0 0 9.4 9.4"><circle cx="4.7" cy="4.7" r="4.1" fill="#d3e6f6" stroke="#93a9c4" stroke-width="0.9"/><rect x="2.2" y="4.1" width="5" height="1.3" fill="#23406f"/></svg><svg class="ic" style="left:372.8px;top:440.81px" width="9.4" height="9.4" viewBox="0 0 9.4 9.4"><circle cx="4.7" cy="4.7" r="4.1" fill="#d3e6f6" stroke="#93a9c4" stroke-width="0.9"/><rect x="2.2" y="4.1" width="5" height="1.3" fill="#23406f"/></svg><svg class="ic" style="left:372.8px;top:516.86px" width="9.4" height="9.4" viewBox="0 0 9.4 9.4"><circle cx="4.7" cy="4.7" r="4.1" fill="#d3e6f6" stroke="#93a9c4" stroke-width="0.9"/><rect x="2.2" y="4.1" width="5" height="1.3" fill="#23406f"/></svg>
<svg class="ic" style="left:0;top:0;pointer-events:none" width="898" height="600" viewBox="0 0 898 600"><rect x="13.1" y="82" width="873.6" height="1.2" fill="#f9f9f9"/><rect x="13.1" y="582.1" width="873.6" height="1.4" fill="#f9f9f9"/><rect x="885.3" y="82" width="1.4" height="501.5" fill="#f7f7f7"/><rect x="13.1" y="82" width="0.8" height="501.5" fill="#e4dfda"/><rect x="12" y="584.8" width="876.6" height="1.3" fill="#f5f5f5"/><rect x="888" y="81.5" width="1.1" height="504.6" fill="#f3f3f3"/><rect x="12" y="80.9" width="876" height="1.15" fill="#707070"/><rect x="12" y="80.9" width="1.15" height="503.9" fill="#7c7c7c"/><rect x="886.7" y="80.9" width="1.3" height="503.9" fill="#8e8e8e"/><rect x="12" y="583.5" width="876" height="1.3" fill="#909090"/><rect x="13.9" y="83" width="335.1" height="1.25" fill="#4fa3f1" rx="0.6"/><rect x="13.9" y="581.7" width="335.1" height="1.8" fill="#459ef6" rx="0.6"/><rect x="13.9" y="83" width="1.55" height="500.5" fill="#56a8f2" rx="0.6"/><rect x="347.05" y="83" width="1.95" height="500.5" fill="#62acf0" rx="0.6"/><rect x="349.3" y="84" width="0.9" height="498" fill="#faf6ee"/><rect x="368.8" y="114.9" width="493" height="1.4" fill="#f9f9f9"/><rect x="368.8" y="569.6" width="493" height="1.4" fill="#f6f6f6"/><rect x="368.8" y="116.3" width="493" height="1.8" fill="#7c7c7c"/><rect x="368.8" y="116.3" width="1.3" height="453.3" fill="#9a9a9a"/><rect x="860.4" y="116.3" width="1.4" height="453.3" fill="#9c9c9c"/><rect x="368.8" y="568" width="493" height="1.6" fill="#a2a2a2"/><rect x="0" y="597.3" width="898" height="1.2" fill="#f7f7f7"/><rect x="0" y="598.5" width="898" height="1.6" fill="#4c4c48"/><rect x="848.5" y="132.9" width="8.1" height="98" fill="#c1c1c1" rx="4.05"/><rect x="384.8" y="557.1" width="294" height="8.3" fill="#c1c1c1" rx="4.1"/></svg>
</div>
</div>
</body></html>
